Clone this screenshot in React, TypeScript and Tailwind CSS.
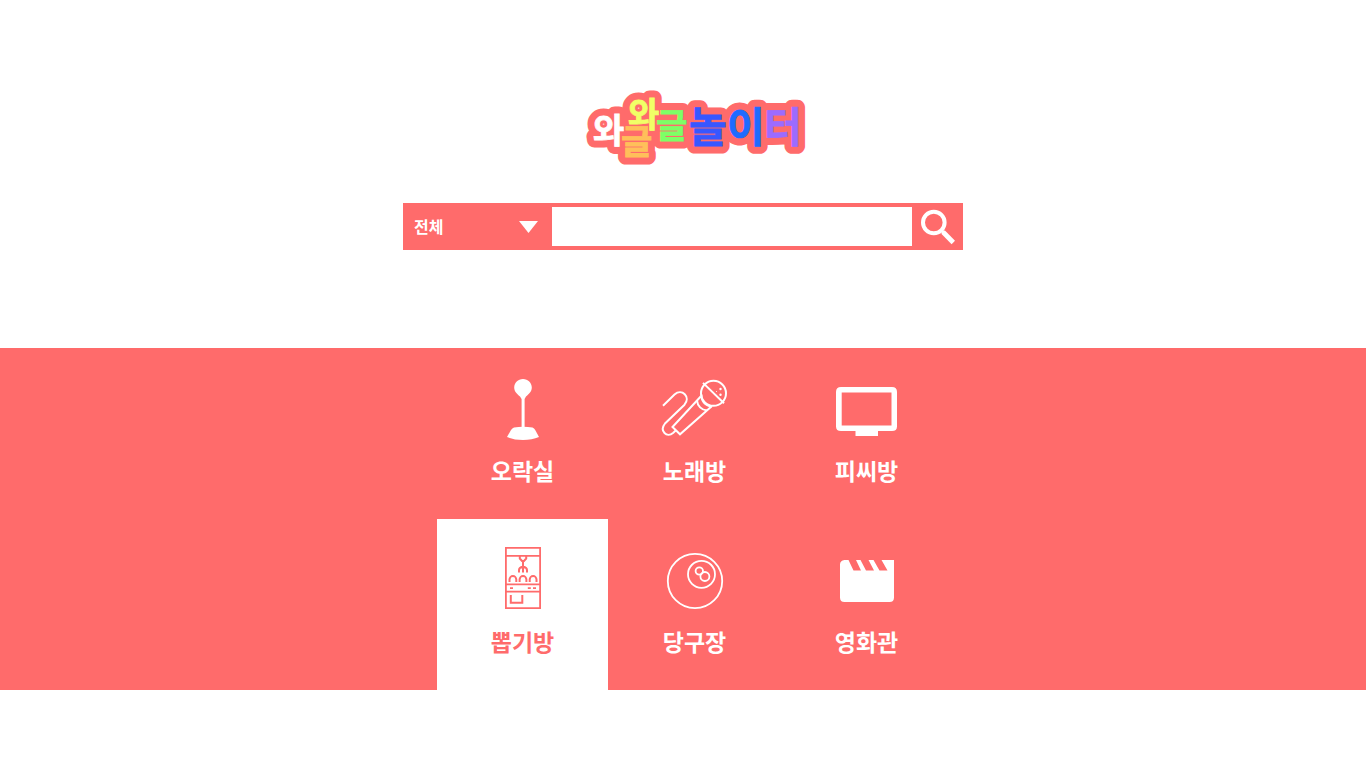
import { useState, type ReactNode } from 'react';

const ArcadeIcon = () => (
  <svg viewBox="0 0 69 68" className="h-[68px] w-[69px]" aria-hidden="true">
    <g fill="currentColor">
      <path d="M35 4C40 4 43.8 7.8 43.8 12.6C43.8 17 40.5 19.5 38 21.5L36.6 24V53H33.6V24L32 21.5C29.5 19.5 26.2 17 26.2 12.6C26.2 7.8 30 4 35 4Z" />
      <path d="M26 52.500Q35 51 44.500 52.500Q46.200 53.300 47.200 55L51 62Q44 65 35 65Q26 65 19 62L23 55Q24.300 53 26 52.500Z" />
    </g>
  </svg>
);

const MicIcon = () => (
  <svg viewBox="0 0 69 68" className="h-[68px] w-[69px]" fill="none" stroke="currentColor" strokeWidth="2" aria-hidden="true">
    <circle cx="53.500" cy="18.300" r="12.500" />
    <path d="M43 7.900L64 28.300" />
    <path d="M40.700 21.500L12.500 52L20 59.300L52 31" />
    <path d="M41.500 19.500C41 26 45 30.500 51.500 31.500" />
    <path d="M37 25.500C37.500 31 41.500 35 47 35.500" />
    <path d="M3 30.700L14.500 19.500C22 13 31 22 24.500 29.700L5 48.500C-1 56 7 63 13 58L16 55.300" />
    <g fill="currentColor" stroke="none">
      <circle cx="60.500" cy="14" r="1.200" />
      <circle cx="60.500" cy="19.700" r="1.200" />
      <circle cx="56.500" cy="16.500" r=".5" />
    </g>
  </svg>
);

const MonitorIcon = () => (
  <svg viewBox="0 0 69 68" className="h-[68px] w-[69px]" fill="currentColor" aria-hidden="true">
    <path fillRule="evenodd" d="M9 12H60Q65 12 65 17V51.500Q65 56 60 56H46V61H23.500V56H9Q4 56 4 51.500V17Q4 12 9 12ZM9.700 17.500V50.500H59.500V17.500Z" />
  </svg>
);

const ClawIcon = () => (
  <svg viewBox="0 0 69 68" className="h-[68px] w-[69px]" fill="none" stroke="currentColor" strokeWidth="1.8" aria-hidden="true">
    <path d="M17.900 1.900H52.100V62.100H17.900ZM18 9.900H52M18 38.300H52M18 45.700H52" />
    <path d="M21.500 36V33.500A3.400 3.400 0 0 1 28.300 33.500V36M31.600 36V33.500A3.400 3.400 0 0 1 38.400 33.500V36M41.700 36V33.500A3.400 3.400 0 0 1 48.500 33.500V36" strokeWidth="2" />
    <path d="M31.800 10V12.500L34 15H36L38.200 12.500V10M35 15V26.500M31 26.500V24Q31 21.500 35 20.500Q39 21.500 39 24V26.500" strokeWidth="2" />
    <path d="M22 42.200H25M39.800 42.200H42.800M45 42.200H48" />
    <path d="M22.800 49V56.800H34.300V49" strokeWidth="2" />
  </svg>
);

const BilliardIcon = () => (
  <svg viewBox="0 0 69 68" className="h-[68px] w-[69px]" fill="none" stroke="currentColor" strokeWidth="1.8" aria-hidden="true">
    <circle cx="35" cy="35" r="27.200" />
    <circle cx="41.500" cy="28.300" r="13.500" />
    <circle cx="39.300" cy="25" r="3.700" />
    <circle cx="44.900" cy="30.500" r="4.500" />
  </svg>
);

const MovieIcon = () => (
  <svg viewBox="0 0 69 68" className="h-[68px] w-[69px]" fill="currentColor" aria-hidden="true">
    <path d="M12.500 14H16.500L21.500 24.500H29L24 14H28.500L34 24.500H42L36.500 14H41.500L47.500 24.500H55.500L49.500 14H62V51.500Q62 56 57.500 56H12.500Q8 56 8 51.500V18.500Q8 14.500 12.500 14Z" />
  </svg>
);

const categories: { name: string; icon: ReactNode }[] = [
  { name: '오락실', icon: <ArcadeIcon /> },
  { name: '노래방', icon: <MicIcon /> },
  { name: '피씨방', icon: <MonitorIcon /> },
  { name: '뽑기방', icon: <ClawIcon /> },
  { name: '당구장', icon: <BilliardIcon /> },
  { name: '영화관', icon: <MovieIcon /> },
];

const logoLetters = [
  { char: '와', x: 11, y: 55, size: 34, color: '#ffffff' },
  { char: '글', x: 39, y: 66, size: 34, color: '#ffbf5a' },
  { char: '와', x: 46, y: 39, size: 34, color: '#f1ff66' },
  { char: '글', x: 74, y: 50, size: 34, color: '#7dff66' },
  { char: '놀', x: 107, y: 54, size: 41, color: '#3757ff' },
  { char: '이', x: 145, y: 54, size: 41, color: '#1f6bff' },
  { char: '터', x: 182, y: 54, size: 41, color: '#9c6bff' },
];

const Logo = () => (
  <svg viewBox="0 0 225 80" className="h-20 w-[225px] font-bold" role="img" aria-label="와글와글 놀이터">
    <g fill="#ff6b6b" stroke="#ff6b6b" strokeWidth="15" strokeLinejoin="round" aria-hidden="true">
      {logoLetters.map((l, i) => (
        <text key={i} x={l.x} y={l.y} fontSize={l.size}>{l.char}</text>
      ))}
    </g>
    {logoLetters.map((l, i) => (
      <text key={i} x={l.x} y={l.y} fontSize={l.size} fill={l.color} stroke={l.color} strokeWidth="0.8">{l.char}</text>
    ))}
  </svg>
);

export default function App() {
  const [active, setActive] = useState('뽑기방');

  return (
    <div className="min-h-screen bg-white font-['Noto_Sans_CJK_KR',sans-serif]">
      <header className="flex flex-col items-center pt-[88px] pb-[98px]">
        <h1 className="pl-[23px]">
          <a href="#" className="block"><Logo /></a>
        </h1>
        <form
          role="search"
          onSubmit={(e) => e.preventDefault()}
          className="mt-[35px] flex h-[47px] w-full max-w-[560px] bg-[#ff6b6b]"
        >
          <div className="relative w-[149px] shrink-0">
            <select
              aria-label="검색 분류"
              className="h-full w-full appearance-none bg-[#ff6b6b] pb-0.5 pl-[11px] text-base font-bold text-white outline-none"
            >
              <option>전체</option>
              {categories.map((c) => <option key={c.name}>{c.name}</option>)}
            </select>
            <svg viewBox="0 0 19 12" className="pointer-events-none absolute top-[18px] right-3.5 h-3 w-[19px]" fill="#fff" aria-hidden="true">
              <path d="M0 0H19L9.500 12Z" />
            </svg>
          </div>
          <input type="text" aria-label="검색어" className="my-1 min-w-0 flex-1 bg-white px-3 text-base outline-none" />
          <button type="submit" aria-label="검색" className="flex w-[51px] shrink-0 items-center justify-center">
            <svg viewBox="0 0 36 36" className="size-9" fill="none" stroke="#fff" strokeWidth="4" aria-hidden="true">
              <circle cx="13.800" cy="13.500" r="10.800" />
              <path d="M21 21L24 24" strokeWidth="2.500" />
              <path d="M23 23L33.300 33.500" strokeWidth="4.800" />
            </svg>
          </button>
        </form>
      </header>

      <nav aria-label="카테고리" className="flex justify-center bg-[#ff6b6b] pl-[23px]">
        <ul className="grid grid-cols-[repeat(3,171px)] gap-x-px">
          {categories.map((c) => (
            <li key={c.name}>
              <button
                type="button"
                aria-pressed={active === c.name}
                onClick={() => setActive(c.name)}
                className={`flex h-[171px] w-full flex-col items-center pt-[27px] ${
                  active === c.name ? 'bg-white text-[#ff6b6b]' : 'text-white'
                }`}
              >
                {c.icon}
                <span className="mt-[9px] text-[23px] font-bold leading-9">{c.name}</span>
              </button>
            </li>
          ))}
        </ul>
      </nav>
    </div>
  );
}
